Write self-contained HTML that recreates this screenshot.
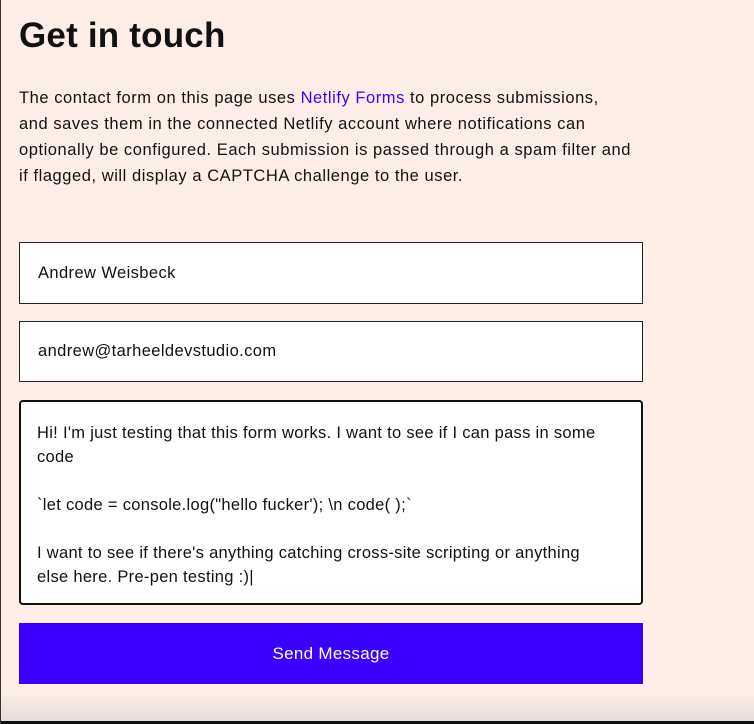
<!DOCTYPE html>
<html><head><style>
html,body{margin:0;padding:0}
body{width:754px;height:724px;background:#fdeee8;position:relative;overflow:hidden;font-family:"Liberation Sans",sans-serif;color:#111}
.lb{position:absolute;left:0;top:0;width:1px;height:724px;background:#333;z-index:2}
.bt{position:absolute;left:0;bottom:0;width:754px;height:32px;background:linear-gradient(#fdeee8,#e3d9d5)}
.bl{position:absolute;left:0;bottom:0;width:754px;height:3px;background:#111}
h1{position:absolute;left:19px;top:16px;margin:0;font-size:35px;font-weight:bold;letter-spacing:0.2px}
p{position:absolute;left:19px;top:85px;margin:0;font-size:16.5px;line-height:26px;width:700px;letter-spacing:0.55px;white-space:nowrap}
a{color:#3a00ff;text-decoration:none}
.in{position:absolute;left:19px;width:624px;background:#fff;border:1px solid #222;font-size:16.5px;letter-spacing:0.4px;box-sizing:border-box;padding-left:18px}
.ta{position:absolute;left:19px;top:400px;width:624px;height:205px;box-sizing:border-box;border:2px solid #111;border-radius:4px;background:#fff;padding:19px 16px;font-size:16.5px;line-height:24px;letter-spacing:0.3px;white-space:nowrap}
.btn{position:absolute;left:19px;top:623px;width:624px;height:61px;background:#3a00ff;color:#fff;font-size:17px;letter-spacing:0.3px;text-align:center;line-height:61px}
</style></head><body>
<div class="lb"></div>
<div class="bt"></div>
<h1>Get in touch</h1>
<p>The contact form on this page uses <a>Netlify Forms</a> to process submissions,<br>and saves them in the connected Netlify account where notifications can<br>optionally be configured. Each submission is passed through a spam filter and<br>if flagged, will display a CAPTCHA challenge to the user.</p>
<div class="in" style="top:242px;height:62px;line-height:60px">Andrew Weisbeck</div>
<div class="in" style="top:321px;height:61px;line-height:59px">andrew@tarheeldevstudio.com</div>
<div class="ta">Hi! I'm just testing that this form works. I want to see if I can pass in some<br>code<br><br>`let code = console.log("hello fucker'); \n code( );`<br><br>I want to see if there's anything catching cross-site scripting or anything<br>else here. Pre-pen testing :)|</div>
<div class="btn">Send Message</div>
<div class="bl"></div>
</body></html>
